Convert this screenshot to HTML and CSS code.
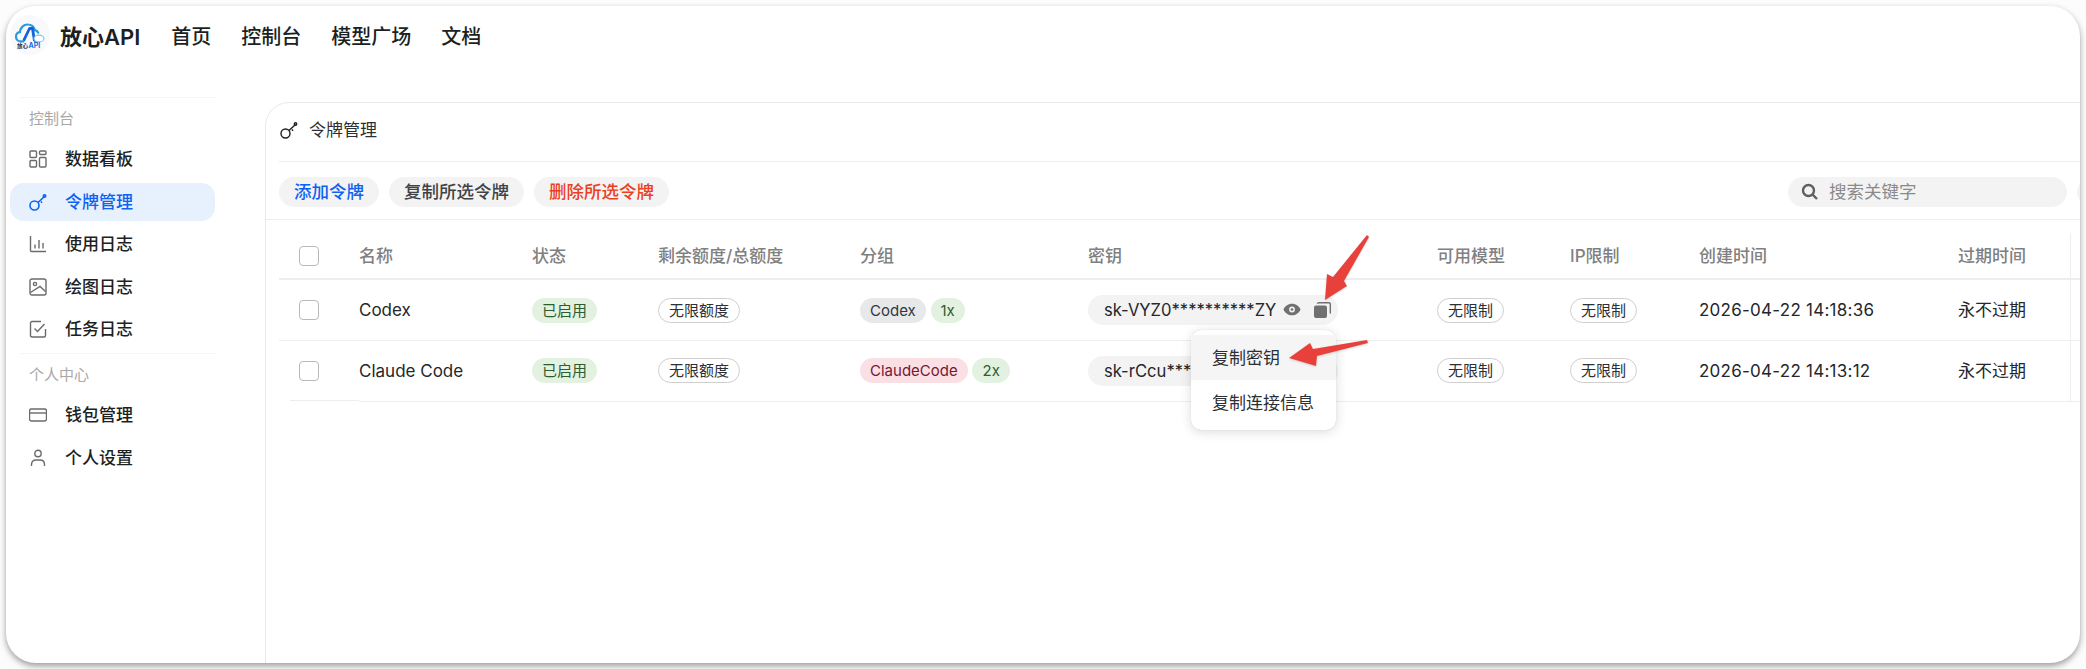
FILE: index.html
```html
<!DOCTYPE html>
<html lang="zh-CN">
<head>
	<meta charset="utf-8">
	<title>放心API 令牌管理</title>
	<link rel="stylesheet" href="styles.css">
</head>
<body>
<div class="window">
	<div class="header">
		<svg class="logo" viewBox="0 0 40 40">
			<circle cx="20" cy="20" r="20" fill="#f8f9fa"/>
			<path d="M11 26.500c-3.200 0-5-2.200-5-4.800 0-2.400 1.700-4.300 4-4.600 .3-4.500 3.600-7.600 7.600-7.600 3.600 0 6.400 2.400 7.400 5.700 1.500.3 2.600 1.200 3.200 2.500" fill="none" stroke="#2a9be0" stroke-width="2.200" stroke-linecap="round"/>
			<path d="M13.500 26 19.500 13.500h3L24.500 26" fill="none" stroke="#1463d8" stroke-width="2.800" stroke-linejoin="round"/>
			<path d="M10 26.500h4M24 26.500h4" stroke="#2a9be0" stroke-width="1.800" fill="none"/>
			<ellipse cx="29" cy="23.500" rx="5" ry="3.400" fill="#fff" stroke="#7cc0ea" stroke-width="1.100"/>
			<text class="logo-dark" x="7" y="33">放心</text>
			<text class="logo-blue" x="18.500" y="33">API</text>
		</svg>
		<div class="brand">放心API</div>
		<div class="nav">
			<span>首页</span>
			<span>控制台</span>
			<span>模型广场</span>
			<span>文档</span>
		</div>
	</div>

	<div class="body">
		<div class="sidebar">
			<div class="side-line"></div>
			<div class="side-label">控制台</div>
			<div class="side-items">
				<div class="side-item">
					<svg class="icon" viewBox="0 0 18 18"><rect x="1" y="1" width="6.500" height="6.500" rx="1"/><rect x="10.500" y="1" width="6.500" height="3.500" rx="1"/><rect x="1" y="10.500" width="6.500" height="6.500" rx="1"/><rect x="10.500" y="7.500" width="6.500" height="9.500" rx="1"/></svg>
					数据看板
				</div>
				<div class="side-item active">
					<svg class="icon" viewBox="0 0 18 18"><circle cx="5.500" cy="12.500" r="4.500"/><path d="M9 9.500 15.500 3.500M12 8.500l1 1.300"/><circle cx="15.500" cy="3" r="1.200"/></svg>
					令牌管理
				</div>
				<div class="side-item">
					<svg class="icon" viewBox="0 0 18 18"><path d="M1.500 1v14.500q0 1 1 1H17M6 9.500v4M10 5v8.500M14 8v5.500"/></svg>
					使用日志
				</div>
				<div class="side-item">
					<svg class="icon" viewBox="0 0 18 18"><rect x="1" y="1" width="16" height="16" rx="2"/><circle cx="6" cy="6" r="1.600"/><path d="M1.500 14.500 11 8.500l5.500 5"/></svg>
					绘图日志
				</div>
				<div class="side-item">
					<svg class="icon" viewBox="0 0 18 18"><path d="M16.500 9v6.500q0 1.500-1.500 1.500H3q-1.500 0-1.500-1.500V3Q1.500 1.500 3 1.500h9"/><path d="M5.500 8.500 8.500 11.500 15.500 4"/></svg>
					任务日志
				</div>
			</div>
			<div class="side-line side-line-low"></div>
			<div class="side-label">个人中心</div>
			<div class="side-items">
				<div class="side-item">
					<svg class="icon" viewBox="0 0 18 18"><rect x="0.500" y="3" width="17" height="12" rx="2"/><path d="M.5 7h17"/></svg>
					钱包管理
				</div>
				<div class="side-item">
					<svg class="icon" viewBox="0 0 18 18"><circle cx="9" cy="4.500" r="3.200"/><path d="M2.500 17v-1.500Q2.500 11 7 11h4q4.500 0 4.500 4.500V17"/></svg>
					个人设置
				</div>
			</div>
		</div>

		<div class="card">
			<div class="card-title">
				<svg class="icon icon-dark" viewBox="0 0 18 18"><circle cx="5.500" cy="12.500" r="4.500"/><path d="M9 9.500 15.500 3.500M12 8.500l1 1.300"/><circle cx="15.500" cy="3" r="1.200"/></svg>
				令牌管理
			</div>
			<div class="toolbar">
				<div class="btn btn-blue">添加令牌</div>
				<div class="btn">复制所选令牌</div>
				<div class="btn btn-red">删除所选令牌</div>
				<div class="search">
					<svg class="search-icon" viewBox="0 0 18 18"><circle cx="7.500" cy="7.500" r="5.500"/><path d="M11.500 11.500 16 16"/></svg>
					<span class="search-text">搜索关键字</span>
				</div>
				<div class="search-next"></div>
			</div>

			<table class="tokens">
				<colgroup>
					<col class="c-check"><col class="c-name"><col class="c-status"><col class="c-quota"><col class="c-group"><col class="c-key"><col class="c-model"><col class="c-ip"><col class="c-created"><col class="c-expire"><col class="c-fixed">
				</colgroup>
				<thead>
					<tr>
						<th><span class="check"></span></th>
						<th>名称</th>
						<th>状态</th>
						<th>剩余额度/总额度</th>
						<th>分组</th>
						<th>密钥</th>
						<th>可用模型</th>
						<th>IP限制</th>
						<th>创建时间</th>
						<th>过期时间</th>
						<th class="fixed"></th>
					</tr>
				</thead>
				<tbody>
					<tr>
						<td><span class="check"></span></td>
						<td>Codex</td>
						<td><span class="tag tag-green">已启用</span></td>
						<td><span class="tag tag-white">无限额度</span></td>
						<td><span class="tag tag-gray">Codex</span> <span class="tag tag-green">1x</span></td>
						<td>
							<div class="key">
								<span class="key-text">sk-VYZ0**********ZY</span>
								<svg class="eye" viewBox="0 0 20 14"><path d="M10 .5C5.500.5 2 3.500.5 7 2 10.500 5.500 13.500 10 13.500s8-3 9.500-6.500C18 3.500 14.500.5 10 .5Z"/><circle cx="10" cy="7" r="3.200" fill="#f3f3f3"/><circle cx="10" cy="7" r="1.500"/></svg>
								<svg class="copy" viewBox="0 0 17 16"><rect x="0" y="3.500" width="13" height="12.500" rx="2"/><path d="M3.500 1.800Q3.500.7 5 .7h10q1.300 0 1.300 1.300v9.500" fill="none" stroke="#707070" stroke-width="1.400"/></svg>
								<div class="popover">
									<div class="pop-item pop-hover">复制密钥</div>
									<div class="pop-item">复制连接信息</div>
								</div>
							</div>
						</td>
						<td><span class="tag tag-white">无限制</span></td>
						<td><span class="tag tag-white">无限制</span></td>
						<td class="date">2026-04-22 14:18:36</td>
						<td>永不过期</td>
						<td class="fixed"></td>
					</tr>
					<tr>
						<td><span class="check"></span></td>
						<td>Claude Code</td>
						<td><span class="tag tag-green">已启用</span></td>
						<td><span class="tag tag-white">无限额度</span></td>
						<td><span class="tag tag-pink">ClaudeCode</span> <span class="tag tag-green">2x</span></td>
						<td>
							<div class="key">
								<span class="key-text">sk-rCcu***</span>
							</div>
						</td>
						<td><span class="tag tag-white">无限制</span></td>
						<td><span class="tag tag-white">无限制</span></td>
						<td class="date">2026-04-22 14:13:12</td>
						<td>永不过期</td>
						<td class="fixed"></td>
					</tr>
				</tbody>
			</table>
		</div>
	</div>
</div>

<!-- annotation arrows drawn over the screenshot -->
<svg class="arrows" viewBox="0 0 2086 669">
	<polygon points="1367,235 1369,237 1344,281 1347,286 1325,300 1327,274 1333,277"/>
	<polygon points="1367,340 1368,343 1317,356 1316,366 1289,358 1310,343 1313,349"/>
</svg>
</body>
</html>
```

FILE: styles.css
```css
* { box-sizing: border-box; }
html, body { margin: 0; padding: 0; height: 100%; overflow: hidden; }
body { position: relative; background: #fcfcfc; font-family: Inter, "Noto Sans CJK SC", sans-serif; font-size: 17px; color: #1c1f23; }

.window { width: 2074px; height: 657px; margin: 6px; background: #fff; border-radius: 30px; overflow: hidden; box-shadow: 0 3px 6px rgba(0,0,0,.38); }

/* top bar */
.header { display: flex; align-items: center; height: 91px; padding: 0 0 29px 4px; }
.logo { width: 40px; height: 40px; margin-top: -4px; margin-right: 10px; flex: none; }
.logo-dark { font: bold 5.500px "Noto Sans CJK SC", sans-serif; fill: #1b2a4a; }
.logo-blue { font: bold 7px Inter, sans-serif; fill: #1a6fe0; }
.brand { font-size: 22px; font-weight: 600; line-height: 30px; }
.nav { display: flex; gap: 30px; margin-left: 31px; font-size: 20px; font-weight: 500; line-height: 30px; }

.body { display: flex; height: 566px; }

/* left menu */
.sidebar { width: 259px; flex: none; padding-left: 4px; padding-right: 50px; }
.side-line { height: 1px; margin-left: 10px; background: #f5f5f5; }
.side-line-low { margin-top: 5px; }
.side-label { height: 22px; line-height: 22px; margin: 10px 0 10px 19px; font-size: 15px; color: #a8a8a8; }
.side-items { display: flex; flex-direction: column; gap: 4.5px; }
.side-item { display: flex; align-items: center; gap: 18px; height: 38px; padding-left: 19px; border-radius: 14px; font-weight: 500; line-height: 24px; }
.side-item.active { background: #e6f1fd; color: #0f62f0; }

.icon { width: 18px; height: 18px; flex: none; fill: none; stroke: #6b6b6b; stroke-width: 1.400; }
.active .icon { stroke: #0f62f0; stroke-width: 1.600; }
.icon-dark { stroke: #1c1f23; }

/* main card */
.card { flex: 1; min-width: 0; margin: 5px -30px -30px 0; border: 1px solid #e9e9e9; border-radius: 24px 24px 0 0; }
.card-title { display: flex; align-items: center; gap: 11px; height: 59px; margin-left: 13px; padding: 0 0 4px 1px; border-bottom: 1px solid #eee; line-height: 24px; color: #2c2f33; }

.toolbar { display: flex; gap: 10px; height: 58px; padding: 15px 0 0 13px; border-bottom: 1px solid #eee; }
.btn { height: 30px; padding: 0 15px; border-radius: 15px; background: #f3f3f3; font-size: 17.500px; line-height: 29px; font-weight: 500; color: #3f4246; }
.btn-blue { color: #0f62f0; }
.btn-red { color: #ec3f22; }
.search { display: flex; align-items: center; gap: 10px; width: 279px; height: 30px; margin-left: auto; padding-left: 13px; border-radius: 15px; background: #f3f3f3; font-size: 17.500px; color: #8a8a8a; }
.search-text { line-height: 29px; height: 30px; }
.search-icon { width: 18px; height: 18px; fill: none; stroke: #5f5f5f; stroke-width: 2.400; }
.search-next { width: 32px; height: 30px; border-radius: 15px 0 0 15px; background: #f3f3f3; }

/* table */
.tokens { width: 1891px; margin: 13px 0 0 13px; border-collapse: collapse; table-layout: fixed; }
.c-check { width: 80px; }
.c-name { width: 173px; }
.c-status { width: 126px; }
.c-quota { width: 202px; }
.c-group { width: 228px; }
.c-key { width: 349px; }
.c-model { width: 133px; }
.c-ip { width: 129px; }
.c-created { width: 259px; }
.c-expire { width: 112px; }
.c-fixed { width: 100px; }

.tokens th { height: 46px; padding: 0; border-bottom: 2px solid #eee; text-align: left; font-weight: 500; color: #808080; line-height: 24px; }
.tokens td { height: 61px; padding: 0; border-bottom: 1px solid #eee; color: #24272b; line-height: 24px; white-space: nowrap; }
.tokens tr:last-child td:first-child { border-bottom: 0; background: linear-gradient(#eee, #eee) 11px 100% / 100% 1px no-repeat; }
.tokens th:first-child, .tokens td:first-child { padding-left: 20px; }
.tokens .fixed { border-left: 1px solid #eee; }
.tokens .date { letter-spacing: .25px; }

.check { display: block; width: 20px; height: 20px; border: 1.500px solid #b9b9b9; border-radius: 4px; background: #fff; }

.tag { display: inline-block; height: 25px; padding: 0 10px; border-radius: 13px; font-size: 15px; line-height: 25px; vertical-align: middle; }
.tag-green { background: #e3f1e1; color: #2f5c2f; }
.tag-white { border: 1px solid #cfcfcf; background: #fff; line-height: 23px; color: #2c2f33; }
.tag-gray { background: #e7e8ea; color: #33363a; }
.tag-pink { background: #fae0e5; color: #7a1530; }

.key { position: relative; display: flex; align-items: center; width: 250px; height: 30px; padding-left: 16px; border-radius: 15px; background: #f3f3f3; }
.key-text { width: 179px; overflow: hidden; font-size: 16.600px; }
.eye { width: 18px; height: 13px; flex: none; fill: #707070; }
.copy { width: 17px; height: 16px; flex: none; margin-left: 13px; fill: #707070; }

.popover { position: absolute; left: 103px; top: 35px; z-index: 5; width: 145px; padding: 5px 0; border-radius: 10px; background: #fff; box-shadow: 0 2px 12px rgba(0,0,0,.14), 0 0 1px rgba(0,0,0,.2); }
.pop-item { height: 45px; padding-left: 21px; line-height: 47px; color: #2c2f33; }
.pop-hover { background: #f5f5f5; }

.arrows { position: absolute; left: 0; top: 0; z-index: 10; width: 2086px; height: 669px; fill: #e8413c; filter: drop-shadow(0 1px 1px rgba(0,0,0,.15)); }
```
